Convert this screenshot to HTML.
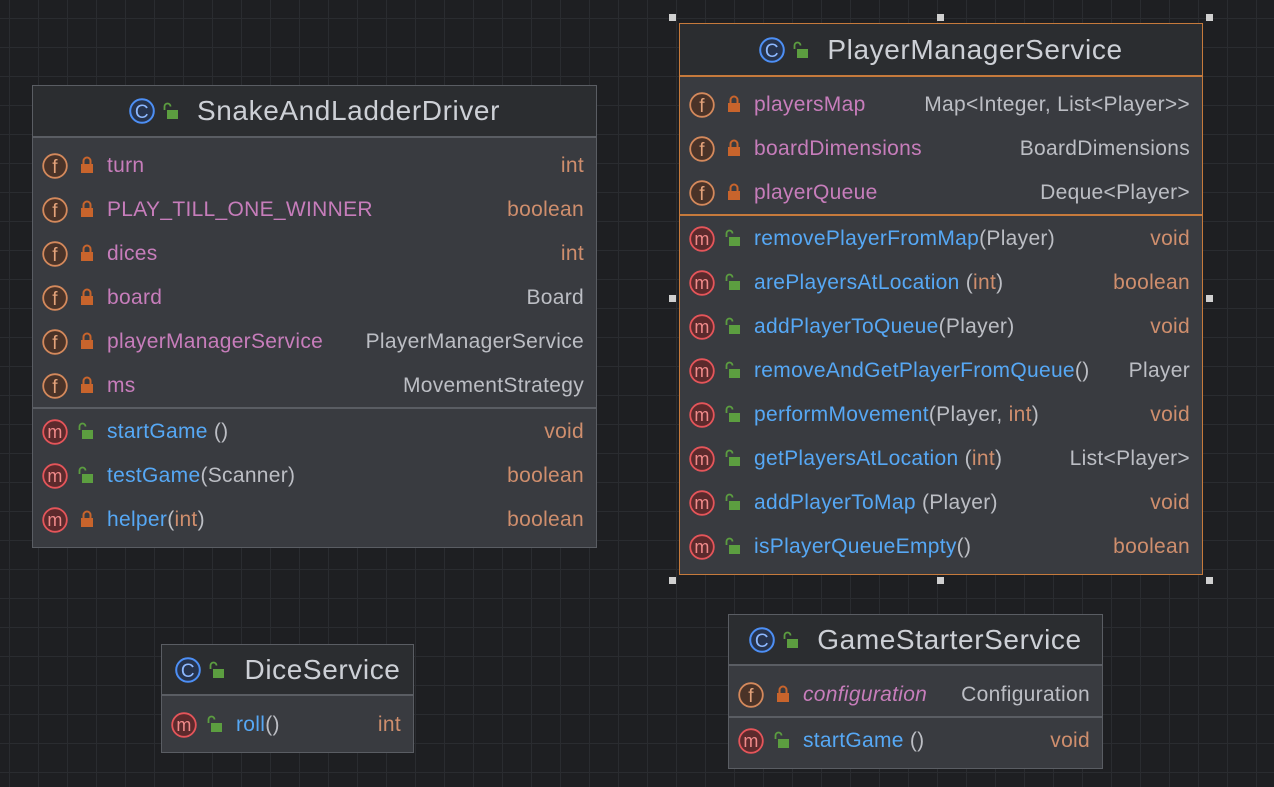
<!DOCTYPE html><html><head><style>
body{margin:0;width:1274px;height:787px;overflow:hidden;background-color:#1e1f22;
background-image:linear-gradient(#2a2c30 1px,transparent 1px),linear-gradient(90deg,#2a2c30 1px,transparent 1px);background-size:29px 29px;background-position:9px 18px;font-family:"Liberation Sans",sans-serif;position:relative}
.box{position:absolute;background:#393b40;border:1px solid #5a5d63;box-sizing:border-box}
.sel{border-color:#c67a3c}
.hd{position:absolute;left:0;right:0;top:0;background:#2b2d30;border-bottom:2px solid #5a5d63;color:#cdd0d6;font-size:28px;letter-spacing:0.6px;display:flex;align-items:center;justify-content:center}
.sel .hd{border-bottom-color:#c67a3c}
.dv{position:absolute;left:0;right:0;height:2px;background:#5a5d63}
.sel .dv{background:#c67a3c}
.r{position:absolute;left:0;right:0;height:44px;line-height:44px;font-size:21px;letter-spacing:0.3px;white-space:nowrap}
.r svg{position:absolute;top:9px}
.n{position:absolute;left:74px}
.t{position:absolute;right:12px;color:#bcbec4}
.f{color:#c77dbb}.m{color:#56a8f5}.p{color:#bcbec4}.o{color:#cf8e6d}
.h{position:absolute;width:7px;height:7px;background:#d0d0d0}
</style></head><body>
<svg width="0" height="0" style="position:absolute"><defs>
<g id="fi"><circle cx="13" cy="13" r="11.8" fill="#4a3328" stroke="#d4895c" stroke-width="1.8"/><text x="13" y="20" font-size="19" fill="#e3a27a" text-anchor="middle" font-family="Liberation Sans">f</text></g>
<g id="mi"><circle cx="13" cy="13" r="11.8" fill="#5c2a2c" stroke="#e5555a" stroke-width="1.8"/><text x="13" y="19" font-size="18" fill="#f08a8a" text-anchor="middle" font-family="Liberation Sans">m</text></g>
<g id="ci"><circle cx="13" cy="13" r="11.8" fill="#26334d" stroke="#4d8ff5" stroke-width="2"/><text x="13" y="20" font-size="19" fill="#8db8ff" text-anchor="middle" font-family="Liberation Sans">C</text></g>
<g id="lc"><path d="M3.5 8V5a3.5 3.5 0 0 1 7 0v3" fill="none" stroke="#c8642c" stroke-width="2"/><rect x="1" y="8" width="12" height="9" fill="#c8642c"/></g>
<g id="lo"><path d="M1.5 8V4.5a3 3 0 0 1 6 0" fill="none" stroke="#5c9e40" stroke-width="1.8"/><rect x="4" y="8" width="11" height="9" fill="#5c9e40"/></g>
</defs></svg>

<!-- SnakeAndLadderDriver -->
<div class="box" style="left:32px;top:85px;width:565px;height:463px">
<div class="hd" style="height:50px"><svg width="26" height="26" style="margin-right:8px"><use href="#ci"/></svg><svg width="16" height="18" style="margin-right:18px"><use href="#lo"/></svg>SnakeAndLadderDriver</div>
<div class="r" style="top:58px"><svg width="26" height="26" style="left:9px"><use href="#fi"/></svg><svg width="14" height="18" style="left:47px;top:12px"><use href="#lc"/></svg><span class="n f">turn</span><span class="t o">int</span></div>
<div class="r" style="top:102px"><svg width="26" height="26" style="left:9px"><use href="#fi"/></svg><svg width="14" height="18" style="left:47px;top:12px"><use href="#lc"/></svg><span class="n f">PLAY_TILL_ONE_WINNER</span><span class="t o">boolean</span></div>
<div class="r" style="top:146px"><svg width="26" height="26" style="left:9px"><use href="#fi"/></svg><svg width="14" height="18" style="left:47px;top:12px"><use href="#lc"/></svg><span class="n f">dices</span><span class="t o">int</span></div>
<div class="r" style="top:190px"><svg width="26" height="26" style="left:9px"><use href="#fi"/></svg><svg width="14" height="18" style="left:47px;top:12px"><use href="#lc"/></svg><span class="n f">board</span><span class="t">Board</span></div>
<div class="r" style="top:234px"><svg width="26" height="26" style="left:9px"><use href="#fi"/></svg><svg width="14" height="18" style="left:47px;top:12px"><use href="#lc"/></svg><span class="n f">playerManagerService</span><span class="t">PlayerManagerService</span></div>
<div class="r" style="top:278px"><svg width="26" height="26" style="left:9px"><use href="#fi"/></svg><svg width="14" height="18" style="left:47px;top:12px"><use href="#lc"/></svg><span class="n f">ms</span><span class="t">MovementStrategy</span></div>
<div class="dv" style="top:321px"></div>
<div class="r" style="top:324px"><svg width="26" height="26" style="left:9px"><use href="#mi"/></svg><svg width="16" height="18" style="left:45px;top:12px"><use href="#lo"/></svg><span class="n m">startGame <span class="p">()</span></span><span class="t o">void</span></div>
<div class="r" style="top:368px"><svg width="26" height="26" style="left:9px"><use href="#mi"/></svg><svg width="16" height="18" style="left:45px;top:12px"><use href="#lo"/></svg><span class="n m">testGame<span class="p">(Scanner)</span></span><span class="t o">boolean</span></div>
<div class="r" style="top:412px"><svg width="26" height="26" style="left:9px"><use href="#mi"/></svg><svg width="14" height="18" style="left:47px;top:12px"><use href="#lc"/></svg><span class="n m">helper<span class="p">(</span><span class="o">int</span><span class="p">)</span></span><span class="t o">boolean</span></div>
</div>

<!-- PlayerManagerService -->
<div class="box sel" style="left:679px;top:23px;width:524px;height:552px">
<div class="hd" style="height:51px"><svg width="26" height="26" style="margin-right:8px"><use href="#ci"/></svg><svg width="16" height="18" style="margin-right:18px"><use href="#lo"/></svg>PlayerManagerService</div>
<div class="r" style="top:59px"><svg width="26" height="26" style="left:9px"><use href="#fi"/></svg><svg width="14" height="18" style="left:47px;top:12px"><use href="#lc"/></svg><span class="n f">playersMap</span><span class="t">Map&lt;Integer, List&lt;Player&gt;&gt;</span></div>
<div class="r" style="top:103px"><svg width="26" height="26" style="left:9px"><use href="#fi"/></svg><svg width="14" height="18" style="left:47px;top:12px"><use href="#lc"/></svg><span class="n f">boardDimensions</span><span class="t">BoardDimensions</span></div>
<div class="r" style="top:147px"><svg width="26" height="26" style="left:9px"><use href="#fi"/></svg><svg width="14" height="18" style="left:47px;top:12px"><use href="#lc"/></svg><span class="n f">playerQueue</span><span class="t">Deque&lt;Player&gt;</span></div>
<div class="dv" style="top:190px"></div>
<div class="r" style="top:193px"><svg width="26" height="26" style="left:9px"><use href="#mi"/></svg><svg width="16" height="18" style="left:45px;top:12px"><use href="#lo"/></svg><span class="n m">removePlayerFromMap<span class="p">(Player)</span></span><span class="t o">void</span></div>
<div class="r" style="top:237px"><svg width="26" height="26" style="left:9px"><use href="#mi"/></svg><svg width="16" height="18" style="left:45px;top:12px"><use href="#lo"/></svg><span class="n m">arePlayersAtLocation <span class="p">(</span><span class="o">int</span><span class="p">)</span></span><span class="t o">boolean</span></div>
<div class="r" style="top:281px"><svg width="26" height="26" style="left:9px"><use href="#mi"/></svg><svg width="16" height="18" style="left:45px;top:12px"><use href="#lo"/></svg><span class="n m">addPlayerToQueue<span class="p">(Player)</span></span><span class="t o">void</span></div>
<div class="r" style="top:325px"><svg width="26" height="26" style="left:9px"><use href="#mi"/></svg><svg width="16" height="18" style="left:45px;top:12px"><use href="#lo"/></svg><span class="n m">removeAndGetPlayerFromQueue<span class="p">()</span></span><span class="t">Player</span></div>
<div class="r" style="top:369px"><svg width="26" height="26" style="left:9px"><use href="#mi"/></svg><svg width="16" height="18" style="left:45px;top:12px"><use href="#lo"/></svg><span class="n m">performMovement<span class="p">(Player, </span><span class="o">int</span><span class="p">)</span></span><span class="t o">void</span></div>
<div class="r" style="top:413px"><svg width="26" height="26" style="left:9px"><use href="#mi"/></svg><svg width="16" height="18" style="left:45px;top:12px"><use href="#lo"/></svg><span class="n m">getPlayersAtLocation <span class="p">(</span><span class="o">int</span><span class="p">)</span></span><span class="t">List&lt;Player&gt;</span></div>
<div class="r" style="top:457px"><svg width="26" height="26" style="left:9px"><use href="#mi"/></svg><svg width="16" height="18" style="left:45px;top:12px"><use href="#lo"/></svg><span class="n m">addPlayerToMap <span class="p">(Player)</span></span><span class="t o">void</span></div>
<div class="r" style="top:501px"><svg width="26" height="26" style="left:9px"><use href="#mi"/></svg><svg width="16" height="18" style="left:45px;top:12px"><use href="#lo"/></svg><span class="n m">isPlayerQueueEmpty<span class="p">()</span></span><span class="t o">boolean</span></div>
</div>

<!-- DiceService -->
<div class="box" style="left:161px;top:644px;width:253px;height:109px">
<div class="hd" style="height:49px"><svg width="26" height="26" style="margin-right:8px"><use href="#ci"/></svg><svg width="16" height="18" style="margin-right:20px"><use href="#lo"/></svg>DiceService</div>
<div class="r" style="top:58px"><svg width="26" height="26" style="left:9px"><use href="#mi"/></svg><svg width="16" height="18" style="left:45px;top:12px"><use href="#lo"/></svg><span class="n m">roll<span class="p">()</span></span><span class="t o">int</span></div>
</div>

<!-- GameStarterService -->
<div class="box" style="left:728px;top:614px;width:375px;height:155px">
<div class="hd" style="height:49px"><svg width="26" height="26" style="margin-right:8px"><use href="#ci"/></svg><svg width="16" height="18" style="margin-right:18px"><use href="#lo"/></svg>GameStarterService</div>
<div class="r" style="top:58px"><svg width="26" height="26" style="left:9px"><use href="#fi"/></svg><svg width="14" height="18" style="left:47px;top:12px"><use href="#lc"/></svg><span class="n f" style="font-style:italic">configuration</span><span class="t">Configuration</span></div>
<div class="dv" style="top:101px"></div>
<div class="r" style="top:104px"><svg width="26" height="26" style="left:9px"><use href="#mi"/></svg><svg width="16" height="18" style="left:45px;top:12px"><use href="#lo"/></svg><span class="n m">startGame <span class="p">()</span></span><span class="t o">void</span></div>
</div>

<div class="h" style="left:669px;top:14px"></div><div class="h" style="left:937px;top:14px"></div><div class="h" style="left:1206px;top:14px"></div>
<div class="h" style="left:669px;top:295px"></div><div class="h" style="left:1206px;top:295px"></div>
<div class="h" style="left:669px;top:577px"></div><div class="h" style="left:937px;top:577px"></div><div class="h" style="left:1206px;top:577px"></div>
</body></html>
